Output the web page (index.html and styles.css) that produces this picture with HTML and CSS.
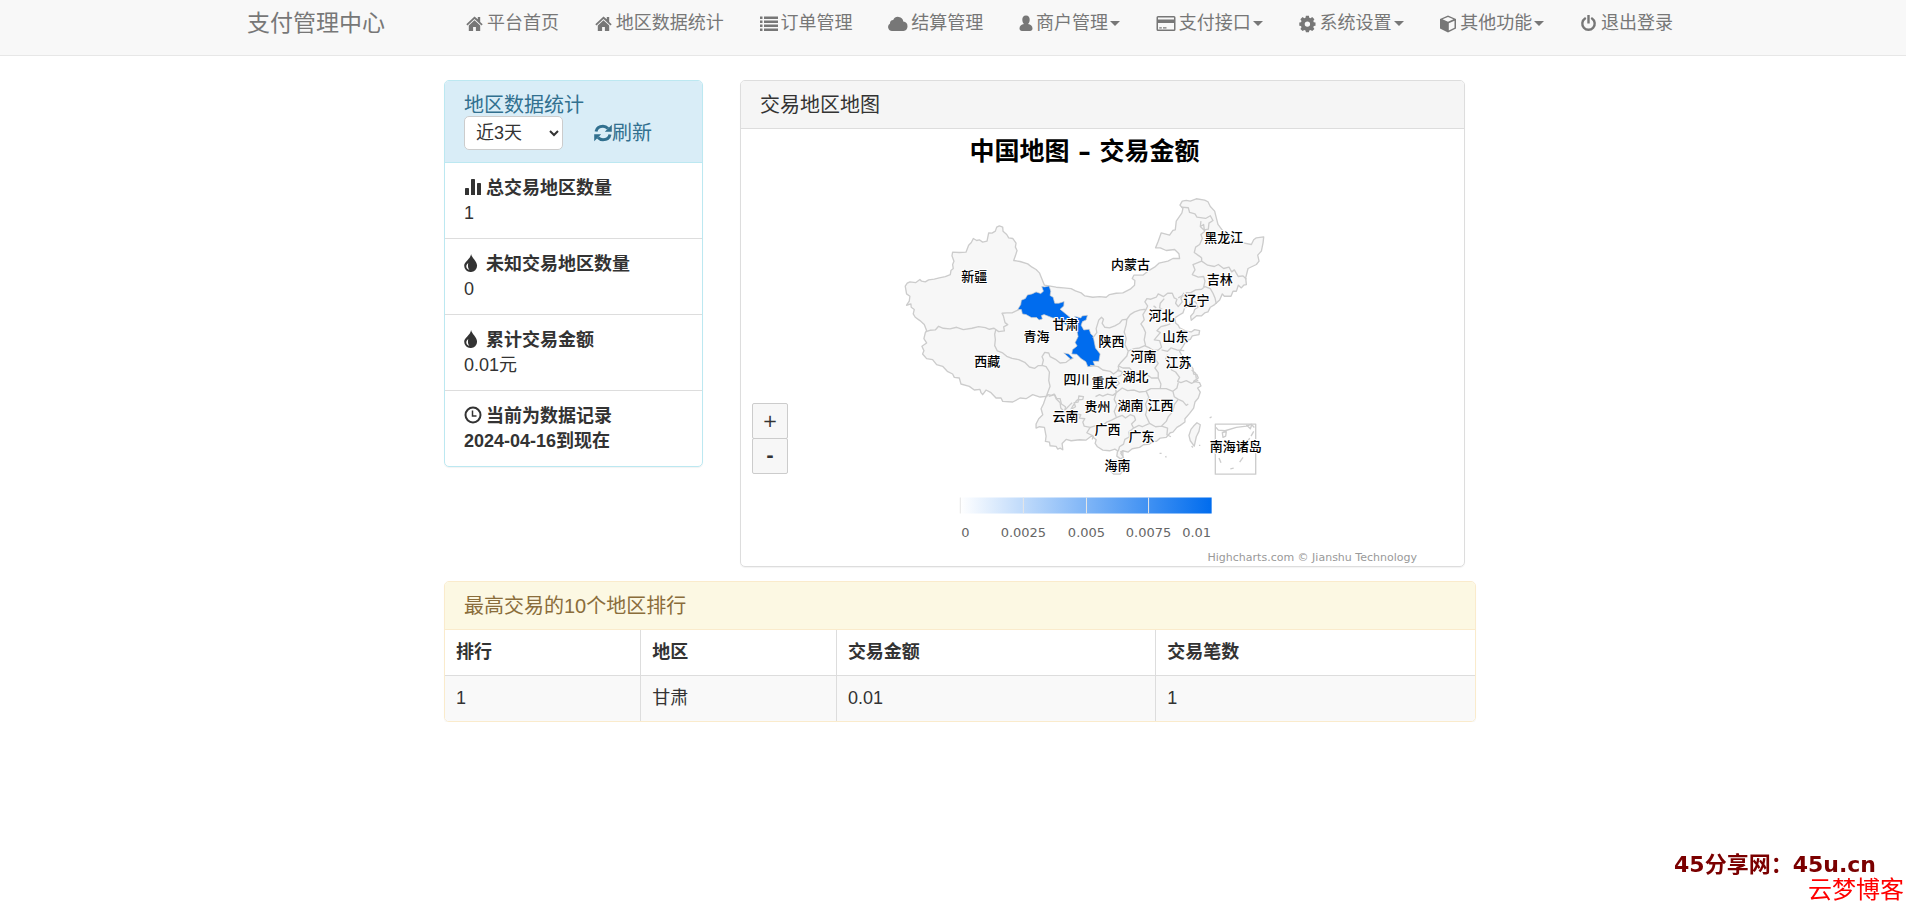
FILE: index.html
```html
<!DOCTYPE html>
<html lang="zh-cn">
<head>
    <meta charset="UTF-8">
    <meta name="viewport" content="width=device-width, initial-scale=1.0">
    <title>地区数据统计</title>
    <link rel="stylesheet" href="styles.css">
</head>
<body>
    <!-- icon set -->
    <svg class="sprite" aria-hidden="true">
        <symbol id="i-home" viewBox="0 0 18 18"><path d="M8.500 1.500.3 9.300l1.200 1.200 7-6.500 7 6.500 1.200-1.200-2.500-2.400V2h-2.400v2.200zM2.800 10.400V16h4.300v-4h2.800v4h4.300v-5.600L8.500 5.200z"/></symbol>
        <symbol id="i-list" viewBox="0 0 18 18"><path d="M0 1.500h2.500v2.500H0zm4 0h14v2.500H4zM0 5.500h2.500v2.500H0zm4 0h14v2.500H4zm-4 4h2.500v2.500H0zm4 0h14v2.500H4zm-4 4h2.500v2.500H0zm4 0h14v2.500H4z"/></symbol>
        <symbol id="i-cloud" viewBox="0 0 20 18"><path d="M4 16a4 4 0 0 1-2-7.400A3.400 3.400 0 0 1 5.200 5 5.300 5.300 0 0 1 15.300 6.500 4.800 4.800 0 0 1 15.500 16z"/></symbol>
        <symbol id="i-user" viewBox="0 0 14 18"><path d="M7 .5c2.600 0 3.700 1.800 3.700 4.200 0 1.700-.7 3.400-1.700 4.200 2.800.6 4.500 1.800 4.500 4.600 0 1.500-1 2.500-2.500 2.500H3C1.500 16 .5 15 .5 13.500c0-2.800 1.700-4 4.500-4.600-1-.8-1.700-2.500-1.700-4.200C3.300 2.300 4.400.5 7 .5z"/></symbol>
        <symbol id="i-card" viewBox="0 0 20 18"><path fill-rule="evenodd" d="M2 1h16q1.500 0 1.500 1.500v12q0 1.500-1.500 1.500H2Q.5 16 .5 14.500v-12Q.5 1 2 1zm0 1.400v2h16v-2zM2 8v6.500h16V8zm1.300 4.200h2.500v1.200H3.300zm3.700 0h3.500v1.200H7z"/></symbol>
        <symbol id="i-cog" viewBox="0 0 18 18"><path fill-rule="evenodd" d="M6.900.8h3l.4 1.900 1.200.5 1.700-1.100 2.200 2.200-1.100 1.700.5 1.200 1.700.3v3.200l-1.700.3-.5 1.200 1.100 1.700-2.200 2.200-1.700-1.100-1.200.5-.4 1.800h-3l-.4-1.800-1.200-.5-1.700 1.100-2.200-2.200 1.100-1.700L2 11 .3 10.700V7.500L2 7.200 2.500 6 1.400 4.300l2.200-2.200 1.700 1.100 1.200-.5zM8.400 6.400a2.700 2.700 0 1 0 0 5.400 2.700 2.700 0 0 0 0-5.400z"/></symbol>
        <symbol id="i-cube" viewBox="0 0 18 18"><path fill-rule="evenodd" d="M9 .5 17 4v9.500L9 17.500 1 13.500V4zM9 2 3.500 4.300 9 6.800l5.500-2.500zM9.800 8.300v7.200l5.700-2.800V5.700z"/></symbol>
        <symbol id="i-power" viewBox="0 0 18 18"><path d="M5 3.500A6.200 6.200 0 1 0 12 3.500" fill="none" stroke="currentColor" stroke-width="2.400" stroke-linecap="round"/><path d="M7.300 0h2.400v8.500H7.300z"/></symbol>
        <symbol id="i-refresh" viewBox="0 0 18 18"><path d="M2 7.500C2.800 3.500 6 2.200 9 2.200c2.200 0 3.700.9 5 2.300M16 10.500C15.200 14.500 12 15.800 9 15.800c-2.200 0-3.700-.9-5-2.300" fill="none" stroke="currentColor" stroke-width="3"/><path d="M17.800.8v7h-7zM.2 17.200v-7h7z"/></symbol>
        <symbol id="i-stats" viewBox="0 0 18 18"><path d="M1 10.800q0-.8.8-.8h2.400q.8 0 .8.800V17H1zM7 1.800Q7 1 7.800 1h2.400q.8 0 .8.800V17H7zM13 5.800q0-.8.8-.8h2.400q.8 0 .8.800V17h-4z"/></symbol>
        <symbol id="i-tint" viewBox="0 0 14 19" preserveAspectRatio="xMinYMid meet"><path fill-rule="evenodd" d="M7.500 0c.6 4 6.300 7.500 6.300 12.300A6.600 6.600 0 0 1 7 19 6.600 6.600 0 0 1 .2 12.300C.2 8 6.500 6 7.500 0zM4.500 9.500c-1.300 1-2.200 2.300-2 4 .2 1.800 1.500 3 3.200 3.200-1.600-1.900-1.800-4.200-1.200-7.200z"/></symbol>
        <symbol id="i-time" viewBox="0 0 18 18"><circle cx="9" cy="9" r="7.500" fill="none" stroke="currentColor" stroke-width="2"/><path d="M8.500 4.500V10h4" fill="none" stroke="currentColor" stroke-width="1.500"/></symbol>
    </svg>

    <nav class="navbar">
        <div class="container nav-inner">
            <a class="brand" href="#">支付管理中心</a>
            <ul class="menu">
                <li><a href="#"><svg class="icon"><use href="#i-home"/></svg>平台首页</a></li>
                <li><a href="#"><svg class="icon"><use href="#i-home"/></svg>地区数据统计</a></li>
                <li><a href="#"><svg class="icon"><use href="#i-list"/></svg>订单管理</a></li>
                <li><a href="#"><svg class="icon icon-wide"><use href="#i-cloud"/></svg>结算管理</a></li>
                <li><a href="#"><svg class="icon icon-slim"><use href="#i-user"/></svg>商户管理<b class="caret"></b></a></li>
                <li><a href="#"><svg class="icon icon-wide"><use href="#i-card"/></svg>支付接口<b class="caret"></b></a></li>
                <li><a href="#"><svg class="icon"><use href="#i-cog"/></svg>系统设置<b class="caret"></b></a></li>
                <li><a href="#"><svg class="icon"><use href="#i-cube"/></svg>其他功能<b class="caret"></b></a></li>
                <li><a href="#"><svg class="icon"><use href="#i-power"/></svg>退出登录</a></li>
            </ul>
        </div>
    </nav>

    <main class="container content">
        <div class="row">
            <section class="panel panel-info">
                <div class="panel-heading">
                    <h3 class="panel-title"><label for="days">地区数据统计</label></h3>
                    <div class="filter">
                        <select id="days" class="days">
                            <option>近3天</option>
                            <option>近7天</option>
                            <option>近30天</option>
                        </select>
                        <a class="refresh" href="#"><svg class="icon-refresh"><use href="#i-refresh"/></svg>刷新</a>
                    </div>
                </div>
                <ul class="list-group">
                    <li><b><svg class="icon"><use href="#i-stats"/></svg>总交易地区数量</b><br>1</li>
                    <li><b><svg class="icon"><use href="#i-tint"/></svg>未知交易地区数量</b><br>0</li>
                    <li><b><svg class="icon"><use href="#i-tint"/></svg>累计交易金额</b><br>0.01元</li>
                    <li><b><svg class="icon"><use href="#i-time"/></svg>当前为数据记录<br>2024-04-16到现在</b></li>
                </ul>
            </section>

            <section class="panel panel-default">
                <div class="panel-heading"><h3 class="panel-title">交易地区地图</h3></div>
                <div class="chart">
                    <svg class="map" viewBox="0 0 722 436">
                        <defs>
                            <linearGradient id="scale"><stop offset="0" stop-color="#fff"/><stop offset="1" stop-color="#006cee"/></linearGradient>
                        </defs>
                        <text class="map-title" x="343" y="31">中国地图 – 交易金额</text>

                        <g class="land" transform="translate(148 52) scale(.33333)">
                            <path class="area" d="M48 315L54 306 62 302 80 304 92 295 97 300 108 302 118 296 135 294 150 290 168 286 183 280 185 268 192 262 190 250 194 240 188 224 190 213 210 214 230 213 238 192 246 184 252 172 262 178 270 176 280 183 293 180 298 155 308 156 318 150 322 138 330 134 340 138 341 150 352 160 358 170 370 172 380 186 378 198 383 208 378 224 373 238 392 241 415 248 428 258 440 265 450 275 456 290 465 312
                            L500 318 522 320 545 322 558 329 575 335 586 344 610 348 630 346 650 348 660 340 680 336 700 335 722 324 735 312 736 298 728 292 733 282 760 282 775 270 795 258 808 246 835 240 850 232 870 232 868 218 855 205 830 208 812 200 798 200 806 180 815 155 840 162 850 148 857 146 860 120 877 95 880 82 871 72 878 60 890 58 902 60 920 53 945 57 955 62 962 76 975 90 980 110 985 130 1000 150 1020 165 1040 178 1060 185 1085 190 1092 176 1100 170 1122 167 1120 185 1115 210 1104 222 1108 240 1100 250 1075 262 1068 290 1070 310 1062 312 1055 320 1046 312 1040 330 1030 330 1024 345 1004 345 998 338 990 356 975 370 962 378 955 392 945 395 935 404 922 403 905 417 903 405 912 395 915 385 925 378 918 362 902 362 895 374 885 380 880 395 868 402 856 410 858 425 866 432 870 440 890 450 905 452 915 445 930 448 928 460 908 464 902 474 890 478 882 492 870 510 878 524 890 530 898 545 910 562 912 578 922 580 926 590 912 600 930 604 934 614 924 620 932 632 926 650 916 662 912 680 900 696 886 712 886 722 872 732 862 738 850 752 842 754 830 768 812 770 800 780 790 780 780 788 762 790 750 798 728 802 716 812 700 808 694 816 702 828 692 832 682 824 684 808 676 803 660 808 640 806 624 796 617 786 620 775 606 764
                            L590 776 570 775 545 778 530 774 518 786 520 805 512 800 505 803 500 795 482 793 480 782 468 780 470 764 465 738 450 736 440 740 440 728 448 712 460 700 455 682 462 668 470 645 452 647 430 640 410 652 392 650 370 662 340 660 335 650 320 650 305 634 290 626 280 640 275 634 272 624 255 626 240 615 215 608 210 590 195 588 190 578 174 570 160 555 142 550 130 535 112 532 100 518 104 508 98 495 112 485 104 472 108 455 112 448 105 430 92 418 78 408 72 398 75 385 66 378 65 368 52 372 60 360 62 345 52 338z"/>
                            <path class="line" d="M110 451L122 447 138 446 148 435 162 441 182 443 202 438 222 445 248 441 268 436 288 439 300 444 314 441 328 451 345 449 343 437 355 430 347 424 342 404 338 396 352 395 368 395 388 385M320 443L316 459 318 475 316 493 324 509 340 515 352 525 368 531 388 535 406 543 420 557 436 561 446 553 458 552 462 536 458 526 466 513 478 515 482 526 498 534 512 545 530 543 542 534 552 530M458 552L470 556 480 572 478 598 482 615 474 636 470 647M470 647L476 640 486 642 494 638 500 652 512 664 514 680 524 690 530 682 540 672 548 664"/>
                            <path class="gansu" d="M385 385L394 370 396 357 408 352 414 341 428 338 440 332 454 337 462 330 457 316 466 317 479 314 484 330 482 343 491 348 496 366 508 366 524 361 523 374 512 384 522 392 534 402 548 414 560 422 564 414 555 405 574 410 578 404 594 402 590 416 579 421 575 432 583 446 599 444 604 458 611 464 614 480 618 500 632 518 628 540 611 540 616 553 595 556 589 541 575 532 562 519 547 518 549 505 563 494 557 484 566 466 562 448 546 438 528 430 513 418 503 410 490 410 464 400 456 403 459 413 449 416 442 409 426 409 410 400 399 398 396 385zM523 515L538 518 550 530 544 534z"/>
                            <g transform="translate(450 270)">
                                <path class="line" d="M160 200L172 184 170 172 178 146 186 138 192 144 188 156 196 168 210 170 226 164 240 156 248 146 262 144 272 130 285 122 302 116 320 114 324 104 316 92 322 82 334 84 350 78 356 68 372 76 384 66 398 66 404 80 412 84 408 96 416 106 428 92 424 82 432 66 438 78M262 144L260 160 254 182 260 202 256 220 266 240 262 254 242 276 236 284M320 114L310 130 314 146 304 158 312 170 318 184 314 206 318 222 300 230 284 232 264 240M316 224L330 230 342 238 356 236 366 228 360 208 344 206 362 184 352 178 364 166 380 162 392 158M366 236L384 240 394 230 412 236 434 238M344 238L332 252 346 262 356 276 346 290 356 304 356 320 336 320 320 308 300 306 282 304 270 290 250 290 236 284M384 250L378 262 392 280 396 296 408 302 420 318 414 330 424 334 440 328 456 336 476 326M456 296L468 306 470 322M356 320L364 338 362 352 380 352 400 360 412 350 416 334M400 360L404 376 416 384 404 400 400 420 386 436 380 450 366 464M416 384L430 390 440 402 446 398M152 282L176 286 190 296 212 300 222 308 238 296 236 284M232 296L250 302 244 312 228 320M230 364L248 350 264 358 284 356 300 362 318 360 334 352 362 352M228 322L240 336 228 346 230 364 220 372 204 368 190 374 180 370 168 376M230 364L224 384 232 400 224 420 230 436M320 360L328 378 318 398 322 414 318 430 330 456M152 468L172 462 186 466 202 452 216 446 232 438 248 432 258 440 272 430 284 434 288 446 276 458 282 470 298 462 308 466 330 456 348 466 366 464 384 470 382 490 394 496M282 470L268 482 270 496 256 504 252 518 240 526 236 540M112 386L130 384 132 376 118 374 116 392 104 394 108 406 98 412 112 428 124 430 120 440 136 442 130 452 134 464 152 468 142 484 162 494 158 504M28 375L46 370 52 382 62 382 66 398 78 406 76 422 92 418 100 404 112 386M374 82L362 96 360 110 368 114M392 112L384 118M350 110L342 104"/>
                                <path class="speck" d="M190 190l6 4-4 3z"/>
                            </g>
                            <g transform="translate(570 0)">
                                <path class="line" d="M306 78L326 80 330 94 346 98 352 108 378 112 392 104 400 118 388 126 386 144 374 146 372 130 362 136 364 120M362 136L376 150 364 160 368 172 360 190 348 198 344 214 358 224 366 230M366 230L366 240 340 250 346 266 338 280 356 288 372 286 376 300 372 318M366 240L384 252 404 256 416 250 432 262 448 258 456 272 464 266 476 286 490 284 500 294M296 350L310 342 322 350 320 334 334 334 348 326 366 324 376 316 392 322 400 336 406 350 410 368"/>
                                <path class="area" d="M342 734L352 724 362 730 358 750 350 766 344 794 332 778 328 762 334 744zM88 850L100 838 124 836 144 846 136 862 122 878 102 878 90 864z"/>
                                <path class="line" d="M240 816h6M258 824l2 4M336 794l4 4M358 792h4M390 710l6-4M122 812l8-4 0 16"/>
                                <path class="frame" d="M407 728h121v150H407z"/>
                                <path class="line" d="M409 738L416 746 436 748 470 738 500 734 516 728M500 730L512 742 516 730 524 738M428 754L440 750 438 764 430 768zM522 750L514 764M510 770L504 780M418 830L424 844M490 828L480 842M452 862L462 860"/>
                            </g>
                        </g>

                        <g class="names">
                            <text x="233" y="152">新疆</text><text x="246" y="237">西藏</text>
                            <text x="295" y="212">青海</text><text x="324" y="200">甘肃</text>
                            <text x="335" y="255">四川</text><text x="324" y="292">云南</text>
                            <text x="482" y="113">黑龙江</text><text x="389" y="140">内蒙古</text>
                            <text x="478" y="155">吉林</text><text x="455" y="176">辽宁</text>
                            <text x="420" y="191">河北</text><text x="434" y="212">山东</text>
                            <text x="370" y="217">陕西</text><text x="402" y="232">河南</text>
                            <text x="437" y="238">江苏</text><text x="363" y="258">重庆</text>
                            <text x="394" y="252">湖北</text><text x="356" y="282">贵州</text>
                            <text x="389" y="281">湖南</text><text x="419" y="281">江西</text>
                            <text x="366" y="305">广西</text><text x="400" y="312">广东</text>
                            <text x="376" y="341">海南</text><text x="494" y="322">南海诸岛</text>
                        </g>

                        <rect x="219" y="368" width="251" height="16" fill="url(#scale)"/>
                        <path class="ticks" d="M219 368v16M282 368v16M345 368v16M407 368v16"/>
                        <g class="scale-labels">
                            <text x="224" y="407">0</text>
                            <text x="282" y="407">0.0025</text>
                            <text x="345" y="407">0.005</text>
                            <text x="407" y="407">0.0075</text>
                            <text x="455" y="407">0.01</text>
                        </g>
                        <text class="credits" x="675" y="431">Highcharts.com © Jianshu Technology</text>
                    </svg>
                    <div class="zoom">
                        <button type="button">+</button>
                        <button type="button">-</button>
                    </div>
                </div>
            </section>
        </div>

        <section class="panel panel-warning">
            <div class="panel-heading"><h3 class="panel-title">最高交易的10个地区排行</h3></div>
            <table class="table">
                <thead>
                    <tr><th class="narrow">排行</th><th class="narrow">地区</th><th>交易金额</th><th>交易笔数</th></tr>
                </thead>
                <tbody>
                    <tr><td>1</td><td>甘肃</td><td>0.01</td><td>1</td></tr>
                </tbody>
            </table>
        </section>
    </main>

    <div class="watermark">
        <span class="site">45分享网：45u.cn</span>
        <span class="blog">云梦博客</span>
    </div>
</body>
</html>
```

FILE: styles.css
```css
* {
    box-sizing: border-box;
}

body {
    margin: 0;
    font-family: "Liberation Sans", "Noto Sans CJK SC", sans-serif;
    font-size: 18px;
    line-height: 25px;
    color: #333;
    background-color: #fff;
}

a {
    color: inherit;
    text-decoration: none;
}

ul {
    list-style: none;
    margin: 0;
    padding: 0;
}

.sprite {
    display: none;
}

.container {
    max-width: 1462px;
    margin: 0 auto;
}

/* Navbar */
.navbar {
    background-color: #f8f8f8;
    border-bottom: 1px solid #e7e7e7;
    color: #777;
}

.nav-inner {
    display: flex;
    align-items: flex-start;
    padding: 11px 11px 19px 25px;
}

.brand {
    width: 219px;
    font-size: 23px;
    white-space: nowrap;
}

.menu {
    flex: 1;
    display: flex;
    justify-content: space-between;
    white-space: nowrap;
}

.menu a {
    display: flex;
    align-items: center;
}

.icon {
    width: 18px;
    height: 18px;
    margin-right: 4px;
    fill: currentColor;
    flex: none;
}

.menu .icon { margin-right: 3px; }
.menu .icon-wide { width: 20px; }
.menu .icon-slim { width: 14px; }

.caret {
    margin-left: 2px;
    border-top: 5px solid;
    border-left: 5px solid transparent;
    border-right: 5px solid transparent;
}

/* Panels */
.content {
    padding: 24px 208px 0 222px;
}

.row {
    display: grid;
    grid-template-columns: 259px 1fr;
    gap: 37px;
    align-items: start;
    padding-right: 11px;
    margin-bottom: 14px;
}

.panel {
    border: 1px solid #ddd;
    border-radius: 5px;
    box-shadow: 0 1px 1px rgba(0, 0, 0, 0.05);
    overflow: hidden;
}

.panel-heading {
    padding: 13px 19px 12px;
    border-bottom: 1px solid #ddd;
    background-color: #f5f5f5;
}

.panel-title {
    margin: 0;
    font-size: 20px;
    font-weight: normal;
    line-height: 22px;
}

.panel-info { border-color: #bce8f1; }

.panel-info .panel-heading {
    color: #31708f;
    background-color: #d9edf7;
    border-color: #bce8f1;
}

.panel-warning { border-color: #faebcc; }

.panel-warning .panel-heading {
    color: #8a6d3b;
    background-color: #fcf8e3;
    border-color: #faebcc;
}

.filter {
    display: flex;
    align-items: center;
    gap: 31px;
    font-size: 20px;
}

.days {
    width: 99px;
    height: 34px;
    padding: 0 7px;
    font-family: inherit;
    font-size: 18px;
    color: #333;
    background-color: #fff;
    border: 1px solid #ccc;
    border-radius: 5px;
}

.refresh {
    display: flex;
    align-items: center;
}

.icon-refresh {
    width: 18px;
    height: 18px;
    fill: currentColor;
}

.list-group li {
    padding: 13px 19px 12px;
    border-bottom: 1px solid #ddd;
}

.list-group li:last-child { border-bottom: none; }

.list-group .icon {
    vertical-align: -2px;
}

/* Map */
.chart {
    position: relative;
}

.map {
    display: block;
    width: 100%;
}

.map-title {
    font-family: "DejaVu Sans", "Noto Sans CJK SC", sans-serif;
    font-size: 25px;
    font-weight: bold;
    text-anchor: middle;
}

.land path {
    stroke: #ccc;
    stroke-width: 4;
    stroke-linejoin: round;
}

.area { fill: #f7f7f7; }
.land .gansu { fill: #006cee; stroke-width: 2; }
.land .speck { fill: #006cee; stroke: none; }
.line, .frame { fill: none; }

.names {
    font-family: "DejaVu Sans", "Noto Sans CJK SC", sans-serif;
    font-size: 13px;
    font-weight: 500;
    text-anchor: middle;
    paint-order: stroke;
    stroke: #fff;
    stroke-width: 2px;
}

.ticks { stroke: #e6e6e6; }

.scale-labels {
    font-family: "DejaVu Sans", sans-serif;
    font-size: 13px;
    fill: #666;
    text-anchor: middle;
}

.credits {
    font-family: "DejaVu Sans", sans-serif;
    font-size: 11px;
    fill: #999;
    text-anchor: end;
}

.zoom {
    position: absolute;
    left: 11px;
    bottom: 92px;
    display: flex;
    flex-direction: column;
}

.zoom button {
    width: 36px;
    height: 36px;
    padding: 0;
    font-family: "DejaVu Sans", sans-serif;
    font-size: 18px;
    color: #333;
    background-color: #f7f7f7;
    border: 1px solid #ccc;
    border-radius: 2px;
}

.zoom button + button {
    margin-top: -1px;
    font-weight: bold;
}

/* Ranking table */
.table {
    width: 100%;
    border-collapse: collapse;
    table-layout: fixed;
}

.table th, .table td {
    padding: 10px 11px;
    text-align: left;
    border-left: 1px solid #ddd;
}

.table th:first-child, .table td:first-child { border-left: none; }
.table td { border-top: 1px solid #ddd; background-color: #f9f9f9; }
.table .narrow { width: 19%; }

.watermark {
    position: fixed;
    right: 2px;
    bottom: 0;
    display: flex;
    flex-direction: column;
    align-items: flex-end;
}

.site {
    margin-right: 28px;
    font-family: "DejaVu Sans", "Noto Sans CJK SC", sans-serif;
    font-size: 22px;
    font-weight: bold;
    color: #7b0000;
}

.blog {
    font-size: 24px;
    color: #f00;
}
```
